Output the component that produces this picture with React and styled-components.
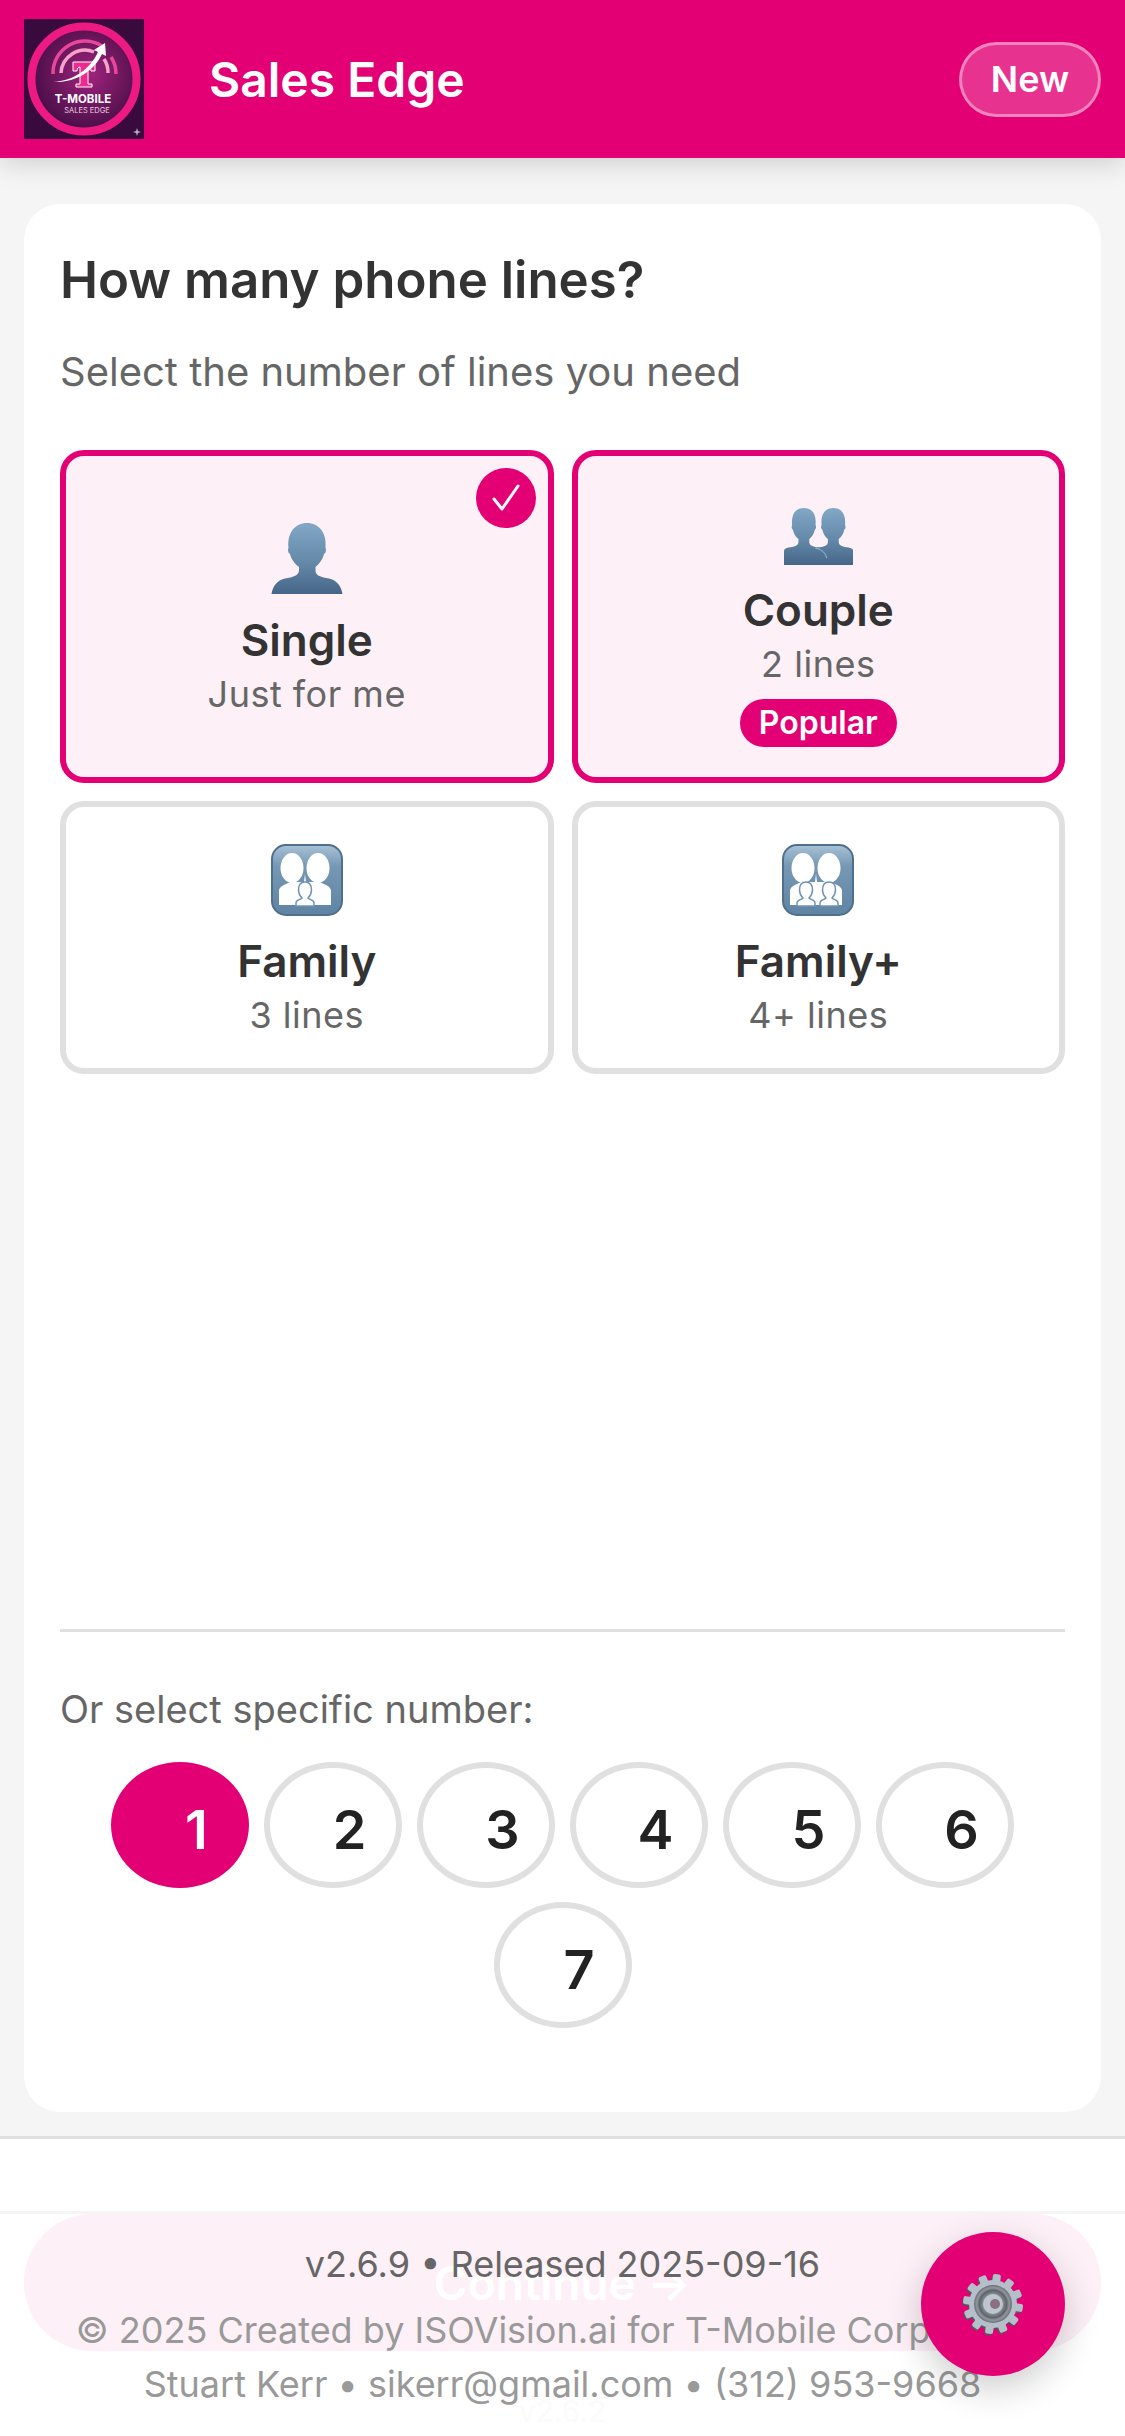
import React from 'react'
import styled, { createGlobalStyle } from 'styled-components'

const GlobalStyle = createGlobalStyle`
  html, body { margin: 0; padding: 0; background: #f5f5f5; }
  * { box-sizing: border-box; }
  body { font-family: Inter, "Liberation Sans", sans-serif; }
`

const Page = styled.div`
  position: relative;
  display: flex;
  flex-direction: column;
  height: 2436px;
  overflow: hidden;
  background: #f5f5f5;
`

const Header = styled.header`
  position: relative;
  z-index: 2;
  display: flex;
  align-items: center;
  height: 158px;
  padding: 0 24px;
  background: #e20074;
  box-shadow: 0 6px 24px rgba(0, 0, 0, 0.15);
`

const LogoWrap = styled.div`
  width: 120px;
  height: 120px;
  flex: none;
`

const AppTitle = styled.h1`
  flex: 1;
  margin: 0 0 0 65px;
  color: #fff;
  font-size: 48px;
  font-weight: 600;
`

const NewButton = styled.button`
  width: 142px;
  height: 75px;
  padding: 0;
  border: 3px solid rgba(255, 255, 255, 0.4);
  border-radius: 38px;
  background: rgba(255, 255, 255, 0.2);
  color: #fff;
  font-family: inherit;
  font-size: 36px;
  font-weight: 600;
`

const Main = styled.main`
  flex: 1;
  display: flex;
  padding: 46px 24px 24px;
`

const Card = styled.section`
  flex: 1;
  display: flex;
  flex-direction: column;
  padding: 41px 36px 84px;
  border-radius: 36px;
  background: #fff;
`

const Heading = styled.h2`
  margin: 0;
  color: #333;
  font-size: 51px;
  line-height: 70px;
  font-weight: 600;
`

const Subheading = styled.p`
  margin: 31px 0 0;
  color: #666;
  font-size: 40px;
  line-height: 52px;
`

const OptionGrid = styled.div`
  display: grid;
  grid-template-columns: 1fr 1fr;
  gap: 18px;
  margin-top: 52px;
`

const OptionCard = styled.div`
  position: relative;
  display: flex;
  flex-direction: column;
  align-items: center;
  justify-content: center;
  height: ${p => (p.$tall ? 333 : 273)}px;
  padding-top: 7px;
  border: 6px solid ${p => (p.$selected ? '#e20074' : '#e0e0e0')};
  border-radius: 24px;
  background: ${p => (p.$selected ? '#fdf0f7' : '#fff')};
`

const CheckBadge = styled.span`
  position: absolute;
  top: 12px;
  right: 12px;
  display: flex;
  align-items: center;
  justify-content: center;
  width: 60px;
  height: 60px;
  border-radius: 50%;
  background: #e20074;
`

const EmojiBox = styled.div`
  display: flex;
  align-items: flex-end;
  justify-content: center;
  height: 72px;
  margin-bottom: 15px;
`

const OptionTitle = styled.div`
  color: #333;
  font-size: 44px;
  line-height: 60px;
  font-weight: 600;
`

const OptionSub = styled.div`
  color: #666;
  font-size: 36px;
  line-height: 48px;
  letter-spacing: 0.5px;
`

const PopularTag = styled.span`
  margin-top: 11px;
  padding: 0 19px;
  height: 48px;
  border-radius: 24px;
  background: #e20074;
  color: #fff;
  font-size: 32px;
  line-height: 48px;
  font-weight: 600;
`

const Divider = styled.hr`
  width: 100%;
  height: 3px;
  margin: auto 0 0;
  border: 0;
  background: #e0e0e0;
`

const NumberLabel = styled.p`
  margin: 53px 0 0;
  color: #666;
  font-size: 38px;
  line-height: 48px;
`

const NumberRow = styled.div`
  display: flex;
  flex-wrap: wrap;
  justify-content: center;
  gap: 14px 15px;
  margin-top: 29px;
`

const NumberButton = styled.button`
  width: 138px;
  height: 126px;
  padding: 9px 0 0 33px;
  border: 6px solid ${p => (p.$selected ? '#e20074' : '#e0e0e0')};
  border-radius: 50%;
  background: ${p => (p.$selected ? '#e20074' : '#fff')};
  color: ${p => (p.$selected ? '#fff' : '#222')};
  font-family: inherit;
  font-size: 54px;
  font-weight: 600;
`

const Footer = styled.footer`
  position: relative;
  height: 300px;
  border-top: 3px solid #e0e0e0;
  background: #fff;
`

const ContinueStrip = styled.div`
  margin-top: 72px;
  padding: 0 24px;
  border-top: 3px solid #f5f5f5;
`

const ContinueButton = styled.button`
  display: block;
  width: 100%;
  height: 137px;
  border: 0;
  border-radius: 68px;
  background: #fdf0f7;
  color: #fff;
  font-family: inherit;
  font-size: 46px;
  font-weight: 600;
`

const Credits = styled.div`
  position: absolute;
  top: 102px;
  left: 0;
  right: 0;
  text-align: center;
`

const CreditLine = styled.div`
  margin-top: ${p => p.$gap || 0}px;
  color: ${p => p.$color};
  font-size: ${p => p.$size || 36}px;
  line-height: 46px;
  white-space: nowrap;
`

const Fab = styled.button`
  position: absolute;
  left: 921px;
  top: 2232px;
  z-index: 3;
  display: flex;
  align-items: center;
  justify-content: center;
  width: 144px;
  height: 144px;
  padding: 0;
  border: 0;
  border-radius: 50%;
  background: #e20074;
  box-shadow: 0 12px 36px rgba(0, 0, 0, 0.2);
`

const BUST = 'M0.5 71C2 62 7 57 14 55.5C22 54 27 53 28 48L28 44C24 41 20 36 19 31C17 30 16.5 27 17.5 24.5C16 10 24 0 36 0C48 0 56 10 54.5 24.5C55.5 27 55 30 53 31C52 36 48 41 44.5 44L44.5 48C45 53 50 54 58 55.5C65 57 70 62 71.5 71Z'

const BustGradient = ({ id }) => (
  <linearGradient id={id} x1="0" y1="0" x2="0" y2="1">
    <stop offset="0" stopColor="#82a8c6" />
    <stop offset="0.55" stopColor="#6489a9" />
    <stop offset="1" stopColor="#466688" />
  </linearGradient>
)

const SingleIcon = () => (
  <svg width="72" height="72" viewBox="0 0 72 72">
    <defs><BustGradient id="single" /></defs>
    <path d={BUST} fill="url(#single)" />
  </svg>
)

const HALF_BUST = 'M0 57L0 43C0 41 2 40 5 39.5C11 39 16 38 16 34L16 31C13 29 10.5 25 10 22C8.5 21 8 19 9 17C8 7 12 0 22 0C32 0 36 7 35 17C36 19 35.5 21 34 22C33.5 25 31 29 28 31L28 34C28 38 33 39 39 39.5C42 40 44 41 44 43L44 57Z'

const CoupleIcon = () => (
  <svg width="69" height="57" viewBox="0 0 69 57">
    <defs><BustGradient id="couple" /></defs>
    <g transform="scale(0.95 1)">
      <path d={HALF_BUST} fill="url(#couple)" transform="scale(0.95 1)" />
      <path d={HALF_BUST} fill="url(#couple)" transform="translate(31 0) scale(0.95 1)" />
      <path d="M33 40C38 41 43 43 45 50" fill="none" stroke="#9cc0da" strokeWidth="1" />
    </g>
  </svg>
)

const Parents = () => (
  <g fill="#fff">
    <ellipse cx="21" cy="24" rx="11.5" ry="15" />
    <ellipse cx="47" cy="24" rx="11.5" ry="15" />
    <path d="M8 61L8 47C8 42 14 41 19 38L33 38L34 30L35 38L49 38C54 41 60 42 60 47L60 61Z" />
  </g>
)

const Child = ({ x }) => (
  <g transform={`translate(${x} 38)`} stroke="#6f95b4" strokeWidth="1.5" fill="#fff">
    <path d="M0 24L0 21C0 18 4 18 6 16C3 13 2.5 10 2.5 8C2.5 3 5 0 9 0C13 0 15.5 3 15.5 8C15.5 10 15 13 12 16C14 18 18 18 18 21L18 24Z" />
  </g>
)

const FamilyIcon = ({ id, kids }) => (
  <svg width="72" height="72" viewBox="0 0 72 72">
    <defs>
      <linearGradient id={id} x1="0" y1="0" x2="0" y2="1">
        <stop offset="0" stopColor="#a9c2d6" />
        <stop offset="0.3" stopColor="#7698b5" />
        <stop offset="1" stopColor="#5f84a3" />
      </linearGradient>
    </defs>
    <rect x="1" y="1" width="70" height="70" rx="14" fill={`url(#${id})`} stroke="#4f6f8d" strokeWidth="2" />
    <Parents />
    {kids.map(x => <Child key={x} x={x} />)}
  </svg>
)

const gearTeeth = Array.from({ length: 12 }, (_, i) => i * 30)

const GearIcon = () => (
  <svg width="66" height="66" viewBox="0 0 66 66">
    <defs>
      <radialGradient id="gearDisc" cx="0.5" cy="0.5" r="0.5">
        <stop offset="0.5" stopColor="#8b9097" />
        <stop offset="0.72" stopColor="#5f646b" />
        <stop offset="0.85" stopColor="#92979e" />
        <stop offset="1" stopColor="#6a6f76" />
      </radialGradient>
    </defs>
    <g transform="translate(-1 1.5)" fill="#54585e">
      <circle cx="33" cy="33" r="24" />
      {gearTeeth.map(a => <rect key={a} x="29" y="3" width="8" height="12" rx="2" transform={`rotate(${a + 8} 33 33)`} />)}
    </g>
    <g fill="#b4bfc9">
      <circle cx="33" cy="33" r="24" />
      {gearTeeth.map(a => <rect key={a} x="29" y="3" width="8" height="12" rx="2" transform={`rotate(${a + 8} 33 33)`} />)}
    </g>
    <circle cx="33" cy="33" r="19" fill="url(#gearDisc)" />
    <circle cx="33" cy="33" r="10" fill="#bcc6cf" />
    <circle cx="35" cy="33" r="5" fill="#8c6f80" />
  </svg>
)

const Logo = () => (
  <svg width="120" height="120" viewBox="0 0 120 120">
    <defs>
      <radialGradient id="logoDisc" cx="0.55" cy="0.45" r="0.6">
        <stop offset="0" stopColor="#a1237f" />
        <stop offset="0.6" stopColor="#671559" />
        <stop offset="1" stopColor="#3e0c45" />
      </radialGradient>
    </defs>
    <rect width="120" height="120" fill="#380a3e" />
    <circle cx="60" cy="60" r="52.5" fill="url(#logoDisc)" stroke="#ee1a84" strokeWidth="8" />
    <path d="M29 55A32 32 0 0 1 78 27" fill="none" stroke="#e8479b" strokeWidth="3.5" />
    <path d="M87 38A32 32 0 0 1 92 55" fill="none" stroke="#e8479b" strokeWidth="3.5" />
    <path d="M37 54A24 24 0 0 1 70 33" fill="none" stroke="#f5a3c9" strokeWidth="3.5" />
    <path d="M80 40A24 24 0 0 1 84 54" fill="none" stroke="#f5a3c9" strokeWidth="3.5" />
    <path d="M49 43H71V52H67C67 49 65 48 64 48V65H68V68H52V65H56V48C55 48 53 49 53 52H49Z" fill="#ee2a90" stroke="#fff" strokeWidth="1" />
    <path d="M29 63C50 62 66 50 74 33L70 31L81 24L82 37L78 35C70 52 52 64 29 63Z" fill="#fff" />
    <text x="59" y="84" textAnchor="middle" fill="#fff" fontSize="11.5" fontWeight="700" fontFamily="Inter, sans-serif">T-MOBILE</text>
    <text x="63" y="94" textAnchor="middle" fill="#e4d4e4" fontSize="7.5" fontFamily="Inter, sans-serif">SALES EDGE</text>
    <path d="M113 109L114 112L117 113L114 114L113 117L112 114L109 113L112 112Z" fill="#b9a9c0" />
  </svg>
)

const options = [
  { title: 'Single', sub: 'Just for me', icon: <SingleIcon />, selected: true, tall: true },
  { title: 'Couple', sub: '2 lines', icon: <CoupleIcon />, selected: true, tall: true, tag: 'Popular' },
  { title: 'Family', sub: '3 lines', icon: <FamilyIcon id="fam3" kids={[25]} /> },
  { title: 'Family+', sub: '4+ lines', icon: <FamilyIcon id="fam4" kids={[15, 38]} /> },
]

const numbers = [1, 2, 3, 4, 5, 6, 7]

function App() {
  return (
    <Page>
      <GlobalStyle />
      <Header>
        <LogoWrap><Logo /></LogoWrap>
        <AppTitle>Sales Edge</AppTitle>
        <NewButton>New</NewButton>
      </Header>
      <Main>
        <Card>
          <Heading>How many phone lines?</Heading>
          <Subheading>Select the number of lines you need</Subheading>
          <OptionGrid>
            {options.map(o => (
              <OptionCard key={o.title} $selected={o.selected} $tall={o.tall}>
                {o.title === 'Single' && (
                  <CheckBadge>
                    <svg width="30" height="30" viewBox="0 0 30 30">
                      <path d="M3 16L11 26L27 3" fill="none" stroke="#fff" strokeWidth="3" strokeLinecap="round" strokeLinejoin="round" />
                    </svg>
                  </CheckBadge>
                )}
                <EmojiBox>{o.icon}</EmojiBox>
                <OptionTitle>{o.title}</OptionTitle>
                <OptionSub>{o.sub}</OptionSub>
                {o.tag && <PopularTag>{o.tag}</PopularTag>}
              </OptionCard>
            ))}
          </OptionGrid>
          <Divider />
          <NumberLabel>Or select specific number:</NumberLabel>
          <NumberRow>
            {numbers.map(n => (
              <NumberButton key={n} $selected={n === 1}>{n}</NumberButton>
            ))}
          </NumberRow>
        </Card>
      </Main>
      <Footer>
        <ContinueStrip>
          <ContinueButton>Continue →</ContinueButton>
        </ContinueStrip>
        <Credits>
          <CreditLine $color="#666">v2.6.9 • Released 2025-09-16</CreditLine>
          <CreditLine $color="#999" $gap={20}>© 2025 Created by ISOVision.ai for T-Mobile Corporation</CreditLine>
          <CreditLine $color="#999" $gap={8}>Stuart Kerr • sikerr@gmail.com • (312) 953-9668</CreditLine>
          <CreditLine $color="#fbfbfb" $size={30} $gap={-19}>v2.6.2</CreditLine>
        </Credits>
      </Footer>
      <Fab><GearIcon /></Fab>
    </Page>
  )
}

export default App
